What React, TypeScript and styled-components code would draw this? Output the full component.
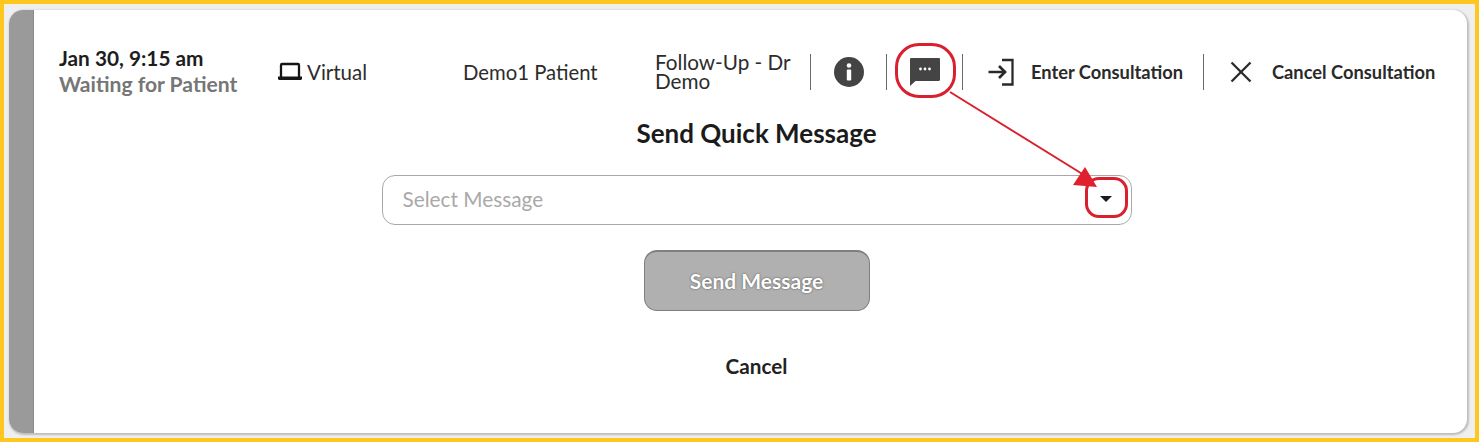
import React from "react";
import styled, { createGlobalStyle } from "styled-components";

const GlobalStyle = createGlobalStyle`
  html, body {
    margin: 0;
    padding: 0;
    background: #efefef;
  }
  body {
    font-family: "Lato", "Noto Sans", sans-serif;
    color: #232323;
  }
`;

const Frame = styled.div`
  position: relative;
  box-sizing: border-box;
  width: 1479px;
  height: 442px;
  padding: 6px 8px 5px 5px;
  border: 4px solid #fdc71f;
  background: #efefef;
`;

const Card = styled.div`
  display: flex;
  height: 100%;
  background: #fff;
  border-radius: 14px;
  overflow: hidden;
  box-shadow: 1px 1px 2px 1px #bdbdbd;
`;

const Stripe = styled.div`
  flex: 0 0 24px;
  background: #9a9a9a;
  border-right: 1px solid #8c8c8c;
`;

const Content = styled.div`
  flex: 1;
  display: flex;
  flex-direction: column;
  padding-top: 35px;
`;

const Header = styled.div`
  display: flex;
  align-items: center;
  height: 54px;
  padding-left: 25px;
`;

const Cell = styled.div<{ $width: number }>`
  flex: 0 0 ${({ $width }) => $width}px;
  display: flex;
  align-items: center;
`;

const DateBlock = styled.div`
  display: flex;
  flex-direction: column;
  margin-top: -3px;
  line-height: 26px;
  white-space: nowrap;
`;

const DateText = styled.span`
  font-size: 20.8px;
  font-weight: 700;
  color: #1d1d1d;
`;

const StatusText = styled.span`
  font-size: 21.1px;
  font-weight: 700;
  color: #767676;
`;

const VisitLabel = styled.span`
  margin-left: 4px;
  font-size: 20.5px;
  color: #2c2c2c;
`;

const PatientName = styled.span`
  font-size: 20.3px;
  color: #2c2c2c;
`;

const VisitType = styled.span`
  width: 150px;
  font-size: 20.7px;
  line-height: 19px;
  color: #2c2c2c;
`;

const Divider = styled.div`
  flex: 0 0 1px;
  height: 36px;
  background: #6c6c6c;
`;

const IconCell = styled.div<{ $width: number }>`
  position: relative;
  flex: 0 0 ${({ $width }) => $width}px;
  align-self: stretch;
  display: flex;
  align-items: center;
  justify-content: center;
`;

const HighlightRing = styled.div`
  position: absolute;
  left: 8px;
  top: -2px;
  width: 61px;
  height: 55px;
  box-sizing: border-box;
  border: 3.5px solid #d8202f;
  border-radius: 24px;
`;

const EnterGlyph = styled.svg`
  margin-left: 8px;
`;

const CloseGlyph = styled.svg`
  margin-left: 6px;
`;

const ActionLabel = styled.span`
  font-size: 18.3px;
  font-weight: 700;
  color: #2a2a2a;
  white-space: nowrap;
`;

const Gap = styled.div`
  flex: 0 0 20px;
`;

const Form = styled.div`
  display: flex;
  flex-direction: column;
  align-items: center;
  padding-left: 12px;
`;

const Title = styled.h2`
  margin: 17px 0 0;
  font-size: 26px;
  line-height: 34px;
  font-weight: 700;
  color: #1b1b1b;
`;

const SelectBox = styled.div`
  position: relative;
  box-sizing: border-box;
  display: flex;
  align-items: center;
  width: 750px;
  height: 50px;
  margin-top: 25px;
  padding: 0 20px 4px;
  border: 1px solid #a8a8a8;
  border-radius: 13px;
  font-size: 20.8px;
  color: #a9a9a9;
`;

const Caret = styled.div`
  position: absolute;
  right: 19px;
  top: 20px;
  width: 0;
  height: 0;
  border-left: 6px solid transparent;
  border-right: 6px solid transparent;
  border-top: 6px solid #1c1c1c;
`;

const CaretRing = styled.div`
  position: absolute;
  right: 3px;
  top: 1px;
  width: 43px;
  height: 41px;
  box-sizing: border-box;
  border: 3px solid #d8202f;
  border-radius: 14px;
`;

const SendButton = styled.button`
  box-sizing: border-box;
  width: 226px;
  height: 61px;
  margin-top: 25px;
  padding: 0 0 2px;
  border: 1px solid #7f7f7f;
  border-top-width: 2px;
  border-radius: 13px;
  background: #b0b0b0;
  color: #fff;
  font-family: inherit;
  font-size: 21px;
  font-weight: 700;
  text-shadow: 0 0 2px #444;
`;

const CancelButton = styled.button`
  margin-top: 39px;
  padding: 0;
  border: none;
  background: none;
  color: #222;
  font-family: inherit;
  font-size: 20.7px;
  line-height: 32px;
  font-weight: 700;
`;

const Overlay = styled.svg`
  position: absolute;
  left: -4px;
  top: -4px;
  pointer-events: none;
`;

const LaptopIcon = () => (
  <svg width="26" height="20" viewBox="0 0 26 20" fill="none">
    <path d="M4 15V3.2C4 2.5 4.5 2 5.2 2h15.6c.7 0 1.2.5 1.200 1.200V15" stroke="#151515" strokeWidth="2.300" />
    <path d="M1 14.500h24v2c0 .9-.7 1.500-1.500 1.500h-21C1.700 18 1 17.400 1 16.500z" fill="#151515" />
  </svg>
);

const InfoIcon = () => (
  <svg width="30" height="30" viewBox="0 0 30 30">
    <circle cx="15" cy="15" r="15" fill="#444" />
    <circle cx="15" cy="8.500" r="2.300" fill="#fff" />
    <rect x="12.800" y="12.500" width="4.400" height="11" rx="1" fill="#fff" />
  </svg>
);

const MessageIcon = () => (
  <svg width="30" height="28" viewBox="0 0 30 28">
    <path
      d="M1.200 0h27.600c.7 0 1.200.5 1.200 1.200v20.600c0 .7-.5 1.200-1.200 1.200H5.500L0 28V1.200C0 .5.500 0 1.200 0z"
      fill="#444"
    />
    <circle cx="10.500" cy="11" r="1.400" fill="#fff" />
    <circle cx="15" cy="11" r="1.400" fill="#fff" />
    <circle cx="19.500" cy="11" r="1.400" fill="#fff" />
  </svg>
);

const EnterIcon = () => (
  <EnterGlyph width="28" height="28" viewBox="0 0 28 28" fill="none" stroke="#2a2a2a" strokeWidth="2.300">
    <path d="M15 2h10.500v24.500H15" />
    <path d="M1.500 14h16.500" strokeWidth="2.700" />
    <path d="M12 8l6 6-6 6" strokeWidth="2.700" />
  </EnterGlyph>
);

const CloseIcon = () => (
  <CloseGlyph width="22" height="22" viewBox="0 0 22 22" fill="none" stroke="#2a2a2a" strokeWidth="2.300">
    <path d="M1.500 1.500l19 19" />
    <path d="M20.500 1.500l-19 19" />
  </CloseGlyph>
);

const App = () => {
  return (
    <>
      <GlobalStyle />
      <Frame>
        <Card>
          <Stripe />
          <Content>
            <Header>
              <Cell $width={218}>
                <DateBlock>
                  <DateText>Jan 30, 9:15 am</DateText>
                  <StatusText>Waiting for Patient</StatusText>
                </DateBlock>
              </Cell>
              <Cell $width={186}>
                <LaptopIcon />
                <VisitLabel>Virtual</VisitLabel>
              </Cell>
              <Cell $width={192}>
                <PatientName>Demo1 Patient</PatientName>
              </Cell>
              <Cell $width={155}>
                <VisitType>Follow-Up - Dr Demo</VisitType>
              </Cell>
              <Divider />
              <IconCell $width={75}>
                <InfoIcon />
              </IconCell>
              <Divider />
              <IconCell $width={75}>
                <MessageIcon />
                <HighlightRing />
              </IconCell>
              <Divider />
              <IconCell $width={68}>
                <EnterIcon />
              </IconCell>
              <ActionLabel>Enter Consultation</ActionLabel>
              <Gap />
              <Divider />
              <IconCell $width={68}>
                <CloseIcon />
              </IconCell>
              <ActionLabel>Cancel Consultation</ActionLabel>
            </Header>
            <Form>
              <Title>Send Quick Message</Title>
              <SelectBox>
                Select Message
                <Caret />
                <CaretRing />
              </SelectBox>
              <SendButton>Send Message</SendButton>
              <CancelButton>Cancel</CancelButton>
            </Form>
          </Content>
        </Card>
        <Overlay width="1479" height="442">
          <line x1="950" y1="92" x2="1084" y2="175" stroke="#d8202f" strokeWidth="2" />
          <polygon points="1085,167 1073,185 1097,187" fill="#e0202f" />
        </Overlay>
      </Frame>
    </>
  );
};

export default App;
